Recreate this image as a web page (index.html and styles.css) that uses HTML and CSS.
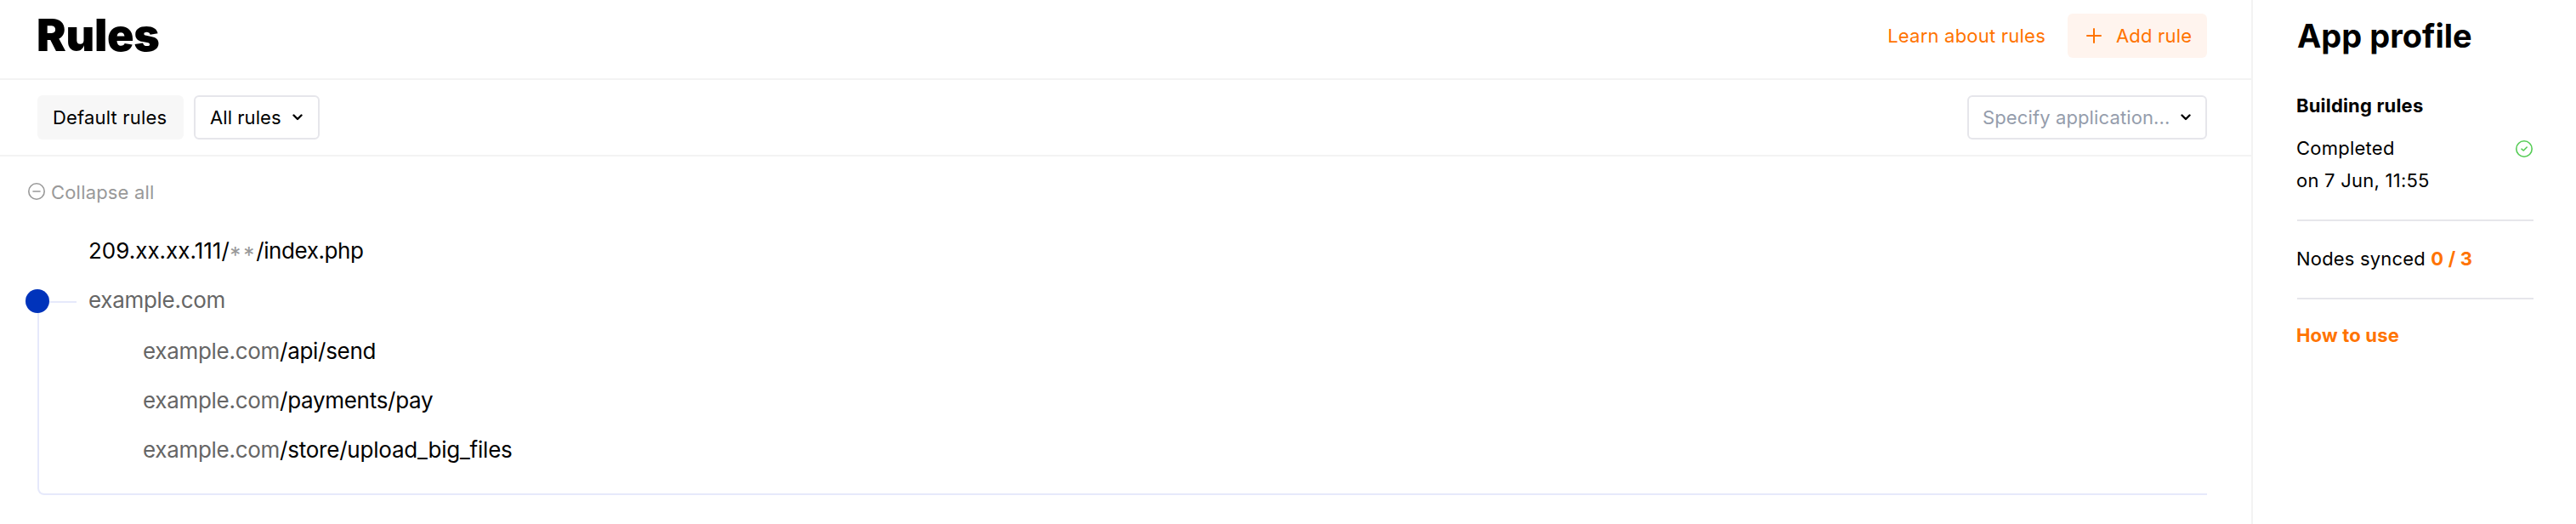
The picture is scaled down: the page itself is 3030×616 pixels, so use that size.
FILE: index.html
```html
<!DOCTYPE html>
<html lang="en">
<head>
<meta charset="utf-8">
<title>Rules</title>
<link rel="stylesheet" href="styles.css">
</head>
<body>
<div class="app">
  <main class="main">
    <header class="header">
      <h1 class="title">Rules</h1>
      <a class="link">Learn about rules</a>
      <button class="btn btn-add">
        <svg class="icon-plus" viewBox="0 0 18 18"><path d="M9 1v16M1 9h16"/></svg>
        <span>Add rule</span>
      </button>
    </header>
    <div class="toolbar">
      <button class="btn btn-default">Default rules</button>
      <button class="btn btn-select"><span>All rules</span>
        <svg class="icon-chevron" viewBox="0 0 12 8"><path d="M1.5 1.5L6 6l4.5-4.5"/></svg>
      </button>
      <button class="btn btn-select btn-app"><span>Specify application...</span>
        <svg class="icon-chevron" viewBox="0 0 12 8"><path d="M1.5 1.5L6 6l4.5-4.5"/></svg>
      </button>
    </div>
    <section class="content">
      <div class="collapse">
        <svg class="icon-circle" viewBox="0 0 20 20"><circle cx="10" cy="10" r="9.2"/><path d="M6 10h8"/></svg>
        <span>Collapse all</span>
      </div>
      <div class="row">209.xx.xx.111/<span class="wild">**</span><span class="file">/index.php</span></div>
      <div class="branch">
        <div class="node"><i class="dot"></i><i class="connector"></i><span class="host">example.com</span></div>
        <div class="child"><span class="host">example.com</span>/api/send</div>
        <div class="child"><span class="host">example.com</span>/payments/pay</div>
        <div class="child"><span class="host">example.com</span><span class="long">/store/upload_big_files</span></div>
      </div>
    </section>
  </main>
  <aside class="profile">
    <h2 class="profile-title">App profile</h2>
    <h3 class="profile-sub">Building rules</h3>
    <div class="status">
      <div class="status-text"><div>Completed</div><div>on 7 Jun, 11:55</div></div>
      <svg class="icon-check" viewBox="0 0 20 20"><circle cx="10" cy="10" r="9.2"/><path d="M7 10.2l2.2 1.8 4-4"/></svg>
    </div>
    <div class="nodes">Nodes synced <b>0 / 3</b></div>
    <a class="howto">How to use</a>
  </aside>
</div>
</body>
</html>
```
FILE: styles.css
```css
* { box-sizing: border-box; }
body { margin: 0; background: #fff; color: #000; font: 22px/38px Inter, sans-serif; letter-spacing: .18px; }
h1, h2, h3 { margin: 0; }
button { font: inherit; color: inherit; letter-spacing: inherit; border: 0; margin: 0; }
svg { display: block; flex: none; fill: none; stroke: currentColor; stroke-width: 2; stroke-linecap: round; stroke-linejoin: round; }

.app { display: flex; height: 616px; overflow: hidden; }
.main { width: 2650px; border-right: 2px solid #f3f3f3; }

.header { display: flex; align-items: center; height: 94px; padding: 16px 52px 24px 44px; border-bottom: 2px solid #f3f3f3; }
.title { margin: -1px auto 0 -1px; font-size: 52px; line-height: 52px; font-weight: 900; letter-spacing: -.3px; }
.link { margin-right: 26px; color: #ff7300; letter-spacing: .22px; }
.btn { display: flex; align-items: center; height: 52px; border-radius: 6px; background: #fff; }
.btn-add { width: 164px; padding: 0 0 0 22px; gap: 17px; background: #fff4ee; color: #ff7300; }
.icon-plus { width: 18px; height: 18px; }

.toolbar { display: flex; gap: 12px; height: 90px; padding: 18px 52px 18px 44px; border-bottom: 2px solid #f3f3f3; }
.btn-default { width: 172px; padding: 0 18px; background: #f7f7f7; }
.btn-select { width: 148px; padding: 0 18px 0 17px; justify-content: space-between; border: 2px solid #e6e6eb; letter-spacing: .06px; }
.btn-app { width: 282px; margin-left: auto; padding: 0 17px 0 16px; letter-spacing: .12px; }
.btn-app span { color: #959dac; }
.icon-chevron { width: 12px; height: 8px; stroke-width: 2.4; }

.content { padding: 23px 52px 0 33px; }
.collapse { display: flex; align-items: center; gap: 7px; height: 38px; color: #999; }
.icon-circle { width: 20px; height: 20px; margin-top: -2px; stroke-width: 1.6; }
.row { margin: 21px 0 0 71px; font-size: 26px; line-height: 58px; letter-spacing: 0; }
.wild { margin: 0 -1px 0 .5px; color: #999; line-height: 0; vertical-align: -4.5px; letter-spacing: 2.9px; }
.file { letter-spacing: -.4px; }
.host { color: #666; }

.branch { display: flow-root; height: 228px; margin: 30px 0 0 11px; border: solid #e6e9fb; border-width: 0 0 2px 2px; border-radius: 0 0 0 8px; font-size: 26px; line-height: 58px; letter-spacing: -.29px; }
.node { display: flex; align-items: center; margin: -30px 0 2px -16px; }
.dot { width: 28px; height: 28px; margin-top: 2px; border-radius: 50%; background: #0033bb; }
.connector { width: 32px; height: 2px; margin: 4px 14px 0 0; background: #e6e9fb; }
.child { padding-left: 122px; }
.long { letter-spacing: -.22px; }

.profile { width: 380px; padding: 16px 50px 0 52px; }
.profile-title { font-size: 38px; line-height: 52px; font-weight: 700; letter-spacing: 0; }
.profile-sub { margin-top: 37px; font-size: 22px; line-height: 38px; font-weight: 700; text-indent: -1px; }
.status { display: flex; justify-content: space-between; padding: 12px 0 27px; }
.status-text { text-indent: -1px; letter-spacing: .24px; }
.icon-check { width: 20px; height: 20px; margin: 10px 1px 0 0; color: #55cc55; stroke-width: 1.6; }
.nodes { padding: 25px 0 27px; border: solid #e6e6eb; border-width: 2px 0; text-indent: -1px; }
.nodes b, .howto { font-weight: 700; color: #ff7300; }
.howto { display: block; padding-top: 23px; text-indent: -1px; }
```
